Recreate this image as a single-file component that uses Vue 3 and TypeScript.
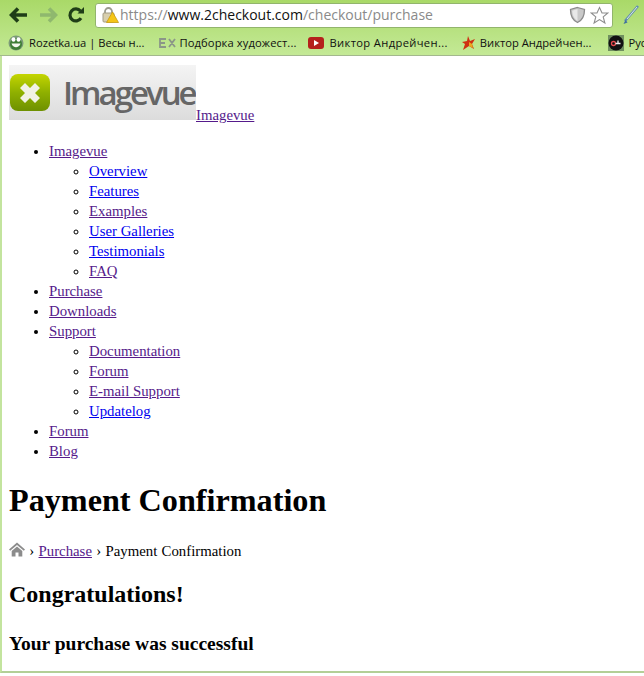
<script setup lang="ts">
interface NavItem { label: string; visited: boolean; children?: NavItem[] }
const v = (label: string, children?: NavItem[]): NavItem => ({ label, visited: true, children })
const b = (label: string): NavItem => ({ label, visited: false })
const nav: NavItem[] = [
  v('Imagevue', [b('Overview'), b('Features'), v('Examples'), b('User Galleries'), b('Testimonials'), v('FAQ')]),
  v('Purchase'),
  v('Downloads'),
  v('Support', [v('Documentation'), v('Forum'), v('E-mail Support'), b('Updatelog')]),
  v('Forum'),
  v('Blog'),
]
</script>

<template>
  <div class="window">
    <header class="chrome">
      <div class="toolbar">
        <svg class="tool back" width="20" height="18" viewBox="0 0 20 18"><path d="M9 2.500 2.500 9 9 15.500M3.500 9H18" fill="none" stroke="#1f3d17" stroke-width="3.600"/></svg>
        <svg class="tool forward" width="20" height="18" viewBox="0 0 20 18"><path d="M11 2.500 17.500 9 11 15.500M16.500 9H2" fill="none" stroke="#8fb86e" stroke-width="3.600"/></svg>
        <svg class="tool reload" width="18" height="18" viewBox="0 0 18 18"><path d="M14 12.200A6 6 0 1 1 13.500 5" fill="none" stroke="#1f3d17" stroke-width="3.200"/><path d="M10.500 7.500H17V1z" fill="#1f3d17"/></svg>
        <div class="omnibox">
          <svg class="lock" width="18" height="18" viewBox="0 0 18 18">
            <path d="M4 8V5.500a3.500 3.500 0 0 1 7 0V8" fill="none" stroke="#9a9a8e" stroke-width="1.800"/>
            <rect x="2" y="7" width="11" height="9" rx="1" fill="#d8cfae" stroke="#a39c84"/>
            <path d="M11.500 6 17.500 16.500H5.500z" fill="#f5c518" stroke="#c79a10" stroke-width=".8"/>
          </svg>
          <span class="url"><span class="dim">https://</span>www.2checkout.com<span class="dim">/checkout/purchase</span></span>
          <svg class="shield" width="17" height="18" viewBox="0 0 17 18"><path d="M8.500 1.500 15.500 3.500C15.500 10 13 14.500 8.500 16.500 4 14.500 1.500 10 1.500 3.500z" fill="#c9c9c9" stroke="#8b8b8b" stroke-width="1.300"/><path d="M8.500 3v12C5.500 13 3.500 10 3.200 4.800z" fill="#e8e8e8"/></svg>
          <svg class="star" width="19" height="19" viewBox="0 0 19 19"><path d="M9.500 1.500 12 7h5.800l-4.600 3.900 1.700 6.100-5.400-3.400L4.100 17l1.700-6.100L1.200 7H7z" fill="#fff" stroke="#8d8d8d" stroke-width="1.100"/></svg>
        </div>
        <svg class="pen" width="18" height="22" viewBox="0 0 18 22"><path d="M16 2 3 17" stroke="#5f8fb0" stroke-width="2.600" fill="none"/><path d="M15 3 5 15" stroke="#dfe9df" stroke-width="1"/><path d="M3.500 16 1.500 20l4-1.500z" fill="#3f6f9f"/></svg>
      </div>
      <div class="bookmarks">
        <div class="bookmark first">
          <svg width="16" height="16" viewBox="0 0 16 16"><circle cx="8" cy="8" r="7.500" fill="#7c9a78"/><circle cx="8" cy="9" r="6" fill="#3e7d35"/><ellipse cx="5.500" cy="4.500" rx="2" ry="2.200" fill="#fff"/><ellipse cx="10.500" cy="4.500" rx="2" ry="2.200" fill="#fff"/><path d="M3.500 8.500C5 13.500 11 13.500 12.500 8.500z" fill="#f4f7ee"/></svg>
          <span>Rozetka.ua | Весы н...</span>
        </div>
        <div class="bookmark second">
          <svg width="18" height="10" viewBox="0 0 18 10"><path d="M7 1H1v8h6M1 5h5M10 1l6 8M16 1l-6 8" fill="none" stroke="#8b9688" stroke-width="1.800"/></svg>
          <span>Подборка художест...</span>
        </div>
        <div class="bookmark third">
          <svg width="16" height="12" viewBox="0 0 16 12"><rect width="16" height="12" rx="3" fill="#b5201c"/><path d="M6 3l5 3-5 3z" fill="#fff"/></svg>
          <span>Виктор Андрейчен...</span>
        </div>
        <div class="bookmark fourth">
          <svg width="15" height="16" viewBox="0 0 15 16"><path d="M7 1l2 5 5-2-3 5 2 5-5-3-6 4 2-6-3-2 5-1z" fill="#cf3012"/><path d="M8 7l3 2 1 4-4-2z" fill="#e9a91e"/></svg>
          <span>Виктор Андрейчен...</span>
        </div>
        <div class="bookmark last">
          <svg width="16" height="16" viewBox="0 0 16 16"><rect width="16" height="16" fill="#6f8f5f"/><circle cx="8" cy="8" r="7.500" fill="#111"/><circle cx="5.500" cy="8.500" r="2" fill="none" stroke="#e5484d" stroke-width="1.300"/><path d="M7.500 8.500H12.500M10 8.500V5.500" stroke="#f1f1f1" stroke-width="1.300"/></svg>
          <span>Рус</span>
        </div>
      </div>
    </header>

    <main class="page">
      <div class="brand">
        <a class="logo-link" href="#">
          <span class="logo">
            <span class="logo-inner">
              <span class="logo-mark">
                <svg width="24" height="24" viewBox="0 0 24 24"><path d="M7 2 12 7 17 2 22 7 17 12 22 17 17 22 12 17 7 22 2 17 7 12 2 7z" fill="#f1f1e6"/></svg>
              </span>
              <span class="logo-text">Imagevue</span>
            </span>
          </span>
        </a><a class="visited" href="#">Imagevue</a>
      </div>

      <ul class="nav">
        <li v-for="item in nav" :key="item.label">
          <a :class="{ visited: item.visited }" href="#">{{ item.label }}</a>
          <ul v-if="item.children">
            <li v-for="child in item.children" :key="child.label">
              <a :class="{ visited: child.visited }" href="#">{{ child.label }}</a>
            </li>
          </ul>
        </li>
      </ul>

      <h1>Payment Confirmation</h1>
      <p class="crumbs">
        <svg width="16" height="15" viewBox="0 0 16 15"><path d="M8 .5 0 7.500l1.200 1.300L8 3l6.800 5.800L16 7.500z" fill="#8c8c8c"/><path d="M8 4.500 2.700 9v5.500h3.800v-4h3v4h3.800V9z" fill="#8c8c8c"/></svg>
        › <a class="visited" href="#">Purchase</a> › Payment Confirmation
      </p>
      <h2>Congratulations!</h2>
      <h3>Your purchase was successful</h3>
    </main>
  </div>
</template>

<style>
html, body { margin: 0; background: #fff; }
</style>

<style scoped>
.window {
  width: 644px;
  height: 676px;
  overflow: hidden;
  display: flex;
  flex-direction: column;
  background: #fff;
  font-family: "Liberation Serif", serif;
  color: #000;
}
.chrome {
  height: 56px;
  flex: none;
  background: linear-gradient(#a9d968, #c4e996);
  border-bottom: 1px solid #a3b88d;
  box-sizing: border-box;
}
.toolbar {
  height: 29px;
  display: flex;
  align-items: center;
  padding-top: 1px;
  box-sizing: border-box;
}
.tool { flex: none; }
.back { margin-left: 9px; }
.forward { margin-left: 9px; }
.reload { margin-left: 9px; }
.omnibox {
  width: 518px;
  height: 25px;
  margin-left: 10px;
  display: flex;
  align-items: center;
  background: #fff;
  border: 1px solid #92b56c;
  border-radius: 3px;
  box-sizing: border-box;
  padding: 0 3px 0 5px;
}
.url {
  flex: 1;
  margin-left: 1px;
  font: 14px/20px "Open Sans", sans-serif;
  color: #111;
  white-space: nowrap;
}
.dim { color: #8a8a8a; }
.lock, .shield, .star, .pen { flex: none; }
.star { margin-left: 4px; }
.pen { margin-left: 9px; }
.bookmarks {
  height: 26px;
  padding-top: 1px;
  box-sizing: border-box;
  display: flex;
  align-items: center;
  font: 11.200px/16px "Open Sans", sans-serif;
  color: #111;
  white-space: nowrap;
}
.bookmark {
  display: flex;
  align-items: center;
  gap: 5px;
  flex: none;
}
.first { margin-left: 8px; }
.second { margin-left: 15px; gap: 2px; letter-spacing: .1px; }
.third { margin-left: 12px; letter-spacing: .35px; }
.fourth { margin-left: 13px; gap: 4px; }
.last { margin-left: 17px; gap: 4px; }
.page {
  flex: 1;
  min-height: 0;
  overflow: hidden;
  margin-bottom: 3px;
  padding: 9px 0 0 7px;
  background: #fff;
  border-left: 2px solid #c3e49e;
  border-bottom: 2px solid #b3cf97;
  font-size: 14.800px;
  line-height: 20px;
}
a { color: #0000ee; text-decoration: underline; }
a.visited { color: #551a8b; }
.brand { line-height: 20px; }
.logo {
  display: inline-block;
  width: 187px;
  height: 55px;
  overflow: hidden;
  vertical-align: baseline;
  background: linear-gradient(#f4f4f4, #dcdcdc);
}
.logo-inner {
  display: flex;
  height: 100%;
  align-items: center;
}
.logo-mark {
  width: 40px;
  height: 37px;
  margin-left: 1px;
  flex: none;
  display: flex;
  align-items: center;
  justify-content: center;
  border-radius: 8px;
  background: linear-gradient(#c4d500, #8fb000 50%, #6e9000);
}
.logo-text {
  margin-left: 13px;
  font: 600 33px/44px "Open Sans", sans-serif;
  letter-spacing: -3px;
  color: #666;
  white-space: nowrap;
}
.nav {
  margin: 16px 0 0;
  padding-left: 40px;
}
.nav ul {
  margin: 0;
  padding-left: 40px;
}
h1 {
  margin: 21px 0 0;
  font-size: 32.200px;
  line-height: 37px;
}
.crumbs {
  margin: 22px 0 0;
  word-spacing: .6px;
}
.crumbs svg { vertical-align: -1px; }
h2 {
  margin: 19px 0 0;
  font-size: 24px;
  line-height: 28px;
}
h3 {
  margin: 25px 0 0;
  font-size: 19.500px;
  line-height: 22px;
}
</style>
